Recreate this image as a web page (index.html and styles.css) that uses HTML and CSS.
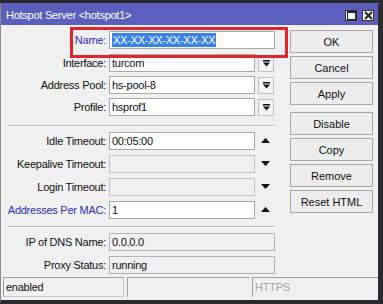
FILE: index.html
```html
<!DOCTYPE html>
<html>
<head>
<meta charset="utf-8">
<link rel="stylesheet" href="styles.css">
</head>
<body>
<div class="window">
  <div class="titlebar">
    <span class="title">Hotspot Server &lt;hotspot1&gt;</span>
    <div class="wbtns">
      <span class="wbtn"><svg width="9" height="9" viewBox="0 0 9 9"><rect x="0.5" y="0.5" width="8" height="8" fill="none" stroke="#222" stroke-width="1"/><rect x="0" y="0" width="9" height="2" fill="#222"/></svg></span>
      <span class="wbtn"><svg width="9" height="9" viewBox="0 0 9 9"><path d="M1 1 L8 8 M8 1 L1 8" stroke="#222" stroke-width="2"/></svg></span>
    </div>
  </div>
  <div class="content">
    <div class="form">
      <div class="row row-name">
        <label class="lbl blue">Name:</label>
        <div class="field"><div class="input wide"><span class="sel">XX-XX-XX-XX-XX-XX</span></div></div>
      </div>
      <div class="group g1">
        <div class="row">
          <label class="lbl">Interface:</label>
          <div class="field"><div class="input">turcom</div><span class="dd"><svg width="7" height="7" viewBox="0 0 7 7"><rect x="0" y="0" width="7" height="1.5" fill="#111"/><polygon points="0,2.5 7,2.5 3.5,6.5" fill="#111"/></svg></span></div>
        </div>
        <div class="row">
          <label class="lbl">Address Pool:</label>
          <div class="field"><div class="input">hs-pool-8</div><span class="dd"><svg width="7" height="7" viewBox="0 0 7 7"><rect x="0" y="0" width="7" height="1.5" fill="#111"/><polygon points="0,2.5 7,2.5 3.5,6.5" fill="#111"/></svg></span></div>
        </div>
        <div class="row">
          <label class="lbl">Profile:</label>
          <div class="field"><div class="input">hsprof1</div><span class="dd"><svg width="7" height="7" viewBox="0 0 7 7"><rect x="0" y="0" width="7" height="1.5" fill="#111"/><polygon points="0,2.5 7,2.5 3.5,6.5" fill="#111"/></svg></span></div>
        </div>
      </div>
      <div class="sep"></div>
      <div class="group g2">
        <div class="row">
          <label class="lbl">Idle Timeout:</label>
          <div class="field"><div class="input">00:05:00</div><span class="arrow"><svg width="9" height="5" viewBox="0 0 9 5"><polygon points="0,5 9,5 4.5,0" fill="#111"/></svg></span></div>
        </div>
        <div class="row">
          <label class="lbl">Keepalive Timeout:</label>
          <div class="field"><div class="input dis"></div><span class="arrow"><svg width="9" height="5" viewBox="0 0 9 5"><polygon points="0,0 9,0 4.5,5" fill="#111"/></svg></span></div>
        </div>
        <div class="row">
          <label class="lbl">Login Timeout:</label>
          <div class="field"><div class="input dis"></div><span class="arrow"><svg width="9" height="5" viewBox="0 0 9 5"><polygon points="0,0 9,0 4.5,5" fill="#111"/></svg></span></div>
        </div>
        <div class="row">
          <label class="lbl blue">Addresses Per MAC:</label>
          <div class="field"><div class="input">1</div><span class="arrow"><svg width="9" height="5" viewBox="0 0 9 5"><polygon points="0,5 9,5 4.5,0" fill="#111"/></svg></span></div>
        </div>
      </div>
      <div class="sep sep2"></div>
      <div class="group g2">
        <div class="row">
          <label class="lbl">IP of DNS Name:</label>
          <div class="field"><div class="input wide ro">0.0.0.0</div></div>
        </div>
        <div class="row">
          <label class="lbl">Proxy Status:</label>
          <div class="field"><div class="input wide ro">running</div></div>
        </div>
      </div>
    </div>
    <div class="buttons">
      <button class="btn">OK</button>
      <button class="btn">Cancel</button>
      <button class="btn">Apply</button>
      <button class="btn gap">Disable</button>
      <button class="btn">Copy</button>
      <button class="btn">Remove</button>
      <button class="btn">Reset HTML</button>
    </div>
  </div>
  <div class="status">
    <div class="cell c1">enabled</div>
    <div class="cell c2"></div>
    <div class="cell c3">HTTPS</div>
  </div>
</div>
</body>
</html>
```
FILE: styles.css
```css
* { box-sizing: border-box; }
html, body { margin: 0; padding: 0; }
body {
  width: 383px;
  height: 304px;
  background: #2a2a2e;
  font-family: "Liberation Sans", Arial, sans-serif;
  font-size: 11px;
  letter-spacing: -0.25px;
  color: #111;
  overflow: hidden;
}
.window {
  margin-top: 3px;
  width: 381px;
  height: 300px;
  background: #f0f0f0;
  border-left: 1px solid #8a8a8a;
  border-top: 1px solid #5a5fbd;
  border-right: 3px solid #2b2b2b;
  border-bottom: 3px solid #2b2b2b;
  display: flex;
  flex-direction: column;
}
.titlebar {
  height: 21px;
  background: #5a5fbd;
  color: #fff;
  display: flex;
  align-items: center;
  justify-content: space-between;
  padding: 0 4px 0 5px;
}
.title { font-size: 11px; }
.wbtns { display: flex; gap: 5px; margin-top: 1px; }
.wbtn {
  width: 12px;
  height: 11px;
  background: #fff;
  border: 1px solid #333;
  display: flex;
  align-items: center;
  justify-content: center;
}
.wbtn svg { display: block; }
.content {
  display: flex;
  gap: 8px;
}
.form {
  width: 281px;
  padding-top: 2px;
  display: flex;
  flex-direction: column;
}
.row {
  display: flex;
  align-items: center;
  height: 22px;
}
.g2 .row { height: 23px; }
.row-name {
  height: 25px;
  position: relative;
}
.row-name::before {
  content: "";
  position: absolute;
  left: 69px;
  top: 0;
  width: 212px;
  height: 25px;
  border: 3px solid #e3232d;
}
.lbl {
  width: 108px;
  text-align: right;
  padding-right: 3px;
  white-space: nowrap;
}
.blue { color: #2b2fbf; }
.field {
  display: flex;
  align-items: center;
  width: 166px;
}
.input {
  width: 146px;
  height: 18px;
  background: #fff;
  border: 1px solid #a8a8a8;
  padding: 0 2px;
  line-height: 16px;
  white-space: nowrap;
  overflow: hidden;
}
.input.wide { width: 166px; }
.input.dis { background: #f0f0f0; border-color: #c2c2c2; }
.input.ro { background: #f0f0f0; border-color: #b4b4b4; }
.sel {
  background: #3a84e6;
  color: #fff;
  padding: 1px 1px;
}
.dd {
  margin-left: 3px;
  width: 16px;
  height: 17px;
  border: 1px solid #c0c0c0;
  background: #f5f5f5;
  display: flex;
  align-items: center;
  justify-content: center;
}
.dd svg, .arrow svg { display: block; }
.arrow {
  width: 20px;
  display: flex;
  justify-content: center;
}
.sep {
  margin: 7px 7px 2px 7px;
  height: 2px;
  border-top: 1px solid #b8b8b8;
  border-bottom: 1px solid #fff;
}
.sep2 { margin-top: 5px; }
.buttons {
  width: 83px;
  padding-top: 5px;
  display: flex;
  flex-direction: column;
  gap: 3px;
}
.btn {
  height: 23px;
  font-family: "Liberation Sans", Arial, sans-serif;
  font-size: 11px;
  color: #111;
  background: #ededed;
  border: 1px solid #a8a8a8;
  padding: 0;
}
.btn.gap { margin-top: 4px; }
.status {
  margin-top: auto;
  margin-bottom: 3px;
  display: flex;
  gap: 3px;
  padding-left: 2px;
  height: 20px;
}
.cell {
  height: 20px;
  border-top: 1px solid #a0a0a0;
  border-left: 1px solid #a0a0a0;
  padding: 3px 2px 0 2px;
}
.c1 { width: 121px; border-right: 1px solid #c8c8c8; border-bottom: 1px solid #c8c8c8; }
.c2 { width: 122px; }
.c3 { flex: 1; color: #a5a5a5; }
```
